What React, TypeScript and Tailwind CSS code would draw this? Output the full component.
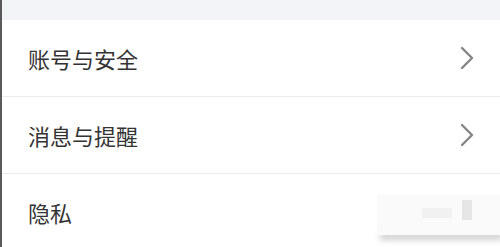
const rows = [
  { label: "账号与安全", arrow: true },
  { label: "消息与提醒", arrow: true },
  { label: "隐私", arrow: false },
];

function Chevron() {
  return (
    <svg width="14" height="24" viewBox="0 0 14 24" fill="none" className="text-[#858585]">
      <polyline points="2,2 12,12 2,22" stroke="currentColor" strokeWidth="2.4" strokeLinecap="round" strokeLinejoin="round" />
    </svg>
  );
}

export default function App() {
  return (
    <div
      className="relative w-[500px] h-[247px] overflow-hidden bg-white border-l-2 border-[#5a5a5a]"
      style={{ fontFamily: '"Noto Sans CJK SC", "Noto Sans", sans-serif' }}
    >
      <div className="h-[20px] bg-[#f2f4f7]" />
      {rows.map((row, i) => (
        <div key={row.label}>
          <div className="flex items-center justify-between h-[76px] pl-[26px] pr-[26px]">
            <span className="text-[22px] leading-none text-[#333333]">{row.label}</span>
            {row.arrow && <Chevron />}
          </div>
          {i < rows.length - 1 && <div className="h-px bg-[#ececec]" />}
        </div>
      ))}
      {/* blurred watermark in the corner */}
      <div className="absolute left-[378px] top-[232px] w-[122px] h-[8px] bg-[#cfcfcf] blur-[3px]" />
      <div className="absolute left-[375px] top-[195px] w-[125px] h-[40px] bg-[#fafafa]" />
      <div className="absolute left-[460px] top-[200px] w-[10px] h-[20px] bg-[#e6e6e6]" />
      <div className="absolute left-[420px] top-[208px] w-[30px] h-[10px] bg-[#f1f1f1]" />
    </div>
  );
}
